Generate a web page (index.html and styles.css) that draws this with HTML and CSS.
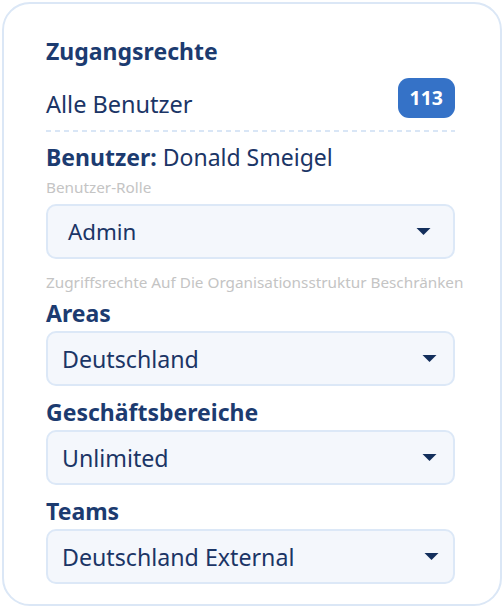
FILE: index.html
```html
<!DOCTYPE html>
<html lang="de">
<head>
  <meta charset="UTF-8" />
  <meta name="viewport" content="width=device-width, initial-scale=1" />
  <title>Zugangsrechte</title>
  <link rel="stylesheet" href="styles.css">
</head>
<body>
  <div class="card">
    <h2>Zugangsrechte</h2>

    <div class="users-row">
      <span>Alle Benutzer</span>
      <span class="badge">113</span>
    </div>
    <div class="divider"></div>

    <p class="user"><strong>Benutzer:</strong> Donald Smeigel</p>
    <p class="hint role-hint">Benutzer-Rolle</p>
    <div class="select role">
      <span>Admin</span>
      <svg class="caret" viewBox="0 0 14 7"><path d="M0 0h14L7 7z" /></svg>
    </div>

    <p class="hint restrict">Zugriffsrechte Auf Die Organisationsstruktur Beschränken</p>

    <h3>Areas</h3>
    <div class="select">
      <span>Deutschland</span>
      <svg class="caret" viewBox="0 0 14 7"><path d="M0 0h14L7 7z" /></svg>
    </div>

    <h3>Geschäftsbereiche</h3>
    <div class="select">
      <span>Unlimited</span>
      <svg class="caret" viewBox="0 0 14 7"><path d="M0 0h14L7 7z" /></svg>
    </div>

    <h3>Teams</h3>
    <div class="select last">
      <span>Deutschland External</span>
      <svg class="caret" viewBox="0 0 14 7"><path d="M0 0h14L7 7z" /></svg>
    </div>
  </div>
</body>
</html>
```

FILE: styles.css
```css
body {
  font-family: "Noto Sans", "Open Sans", sans-serif;
  margin: 0;
  padding: 2px;
  background: #fff;
  color: #1b3566;
}

.card {
  width: 500px;
  height: 604px;
  box-sizing: border-box;
  border: 2px solid #dbe7f6;
  border-radius: 28px;
  padding: 32px 45px 0 42px;
}

h2,
h3 {
  margin: 0;
  font-size: 23px;
  line-height: 30px;
  font-weight: 700;
  color: #1c3b70;
}

.users-row {
  display: flex;
  justify-content: space-between;
  align-items: flex-end;
  margin-top: 12px;
  font-size: 23.5px;
  line-height: 30px;
}

.badge {
  background: #3572c7;
  color: #fff;
  font-weight: 700;
  font-size: 19.5px;
  height: 40px;
  line-height: 40px;
  padding: 0 12px;
  margin-bottom: 1px;
  border-radius: 11px;
}

.divider {
  height: 2px;
  margin-top: 11px;
  background: repeating-linear-gradient(to right, #d9e6f6 0 5px, transparent 5px 9px);
}

.user {
  margin: 10px 0 0;
  font-size: 23px;
  line-height: 30px;
}

.user strong {
  color: #1c3b70;
}

.hint {
  margin: 0;
  font-size: 15.3px;
  line-height: 20px;
  color: #c4c4c4;
  white-space: nowrap;
}

.role-hint {
  margin-top: 5px;
}

.select {
  display: flex;
  justify-content: space-between;
  align-items: center;
  height: 55px;
  box-sizing: border-box;
  margin-top: 3px;
  padding: 0 16px 0 14px;
  background: #f4f7fc;
  border: 2px solid #dce8f7;
  border-radius: 10px;
  font-size: 23.2px;
}

.select.role {
  margin-top: 7px;
  padding: 0 22px 0 20px;
  font-size: 22.3px;
}

.select.last {
  padding-right: 14px;
}

.restrict {
  margin-top: 13px;
  margin-bottom: 6px;
}

.select + h3 {
  margin-top: 11px;
}

.caret {
  width: 15px;
  height: 7px;
  fill: #132f5c;
}
```
